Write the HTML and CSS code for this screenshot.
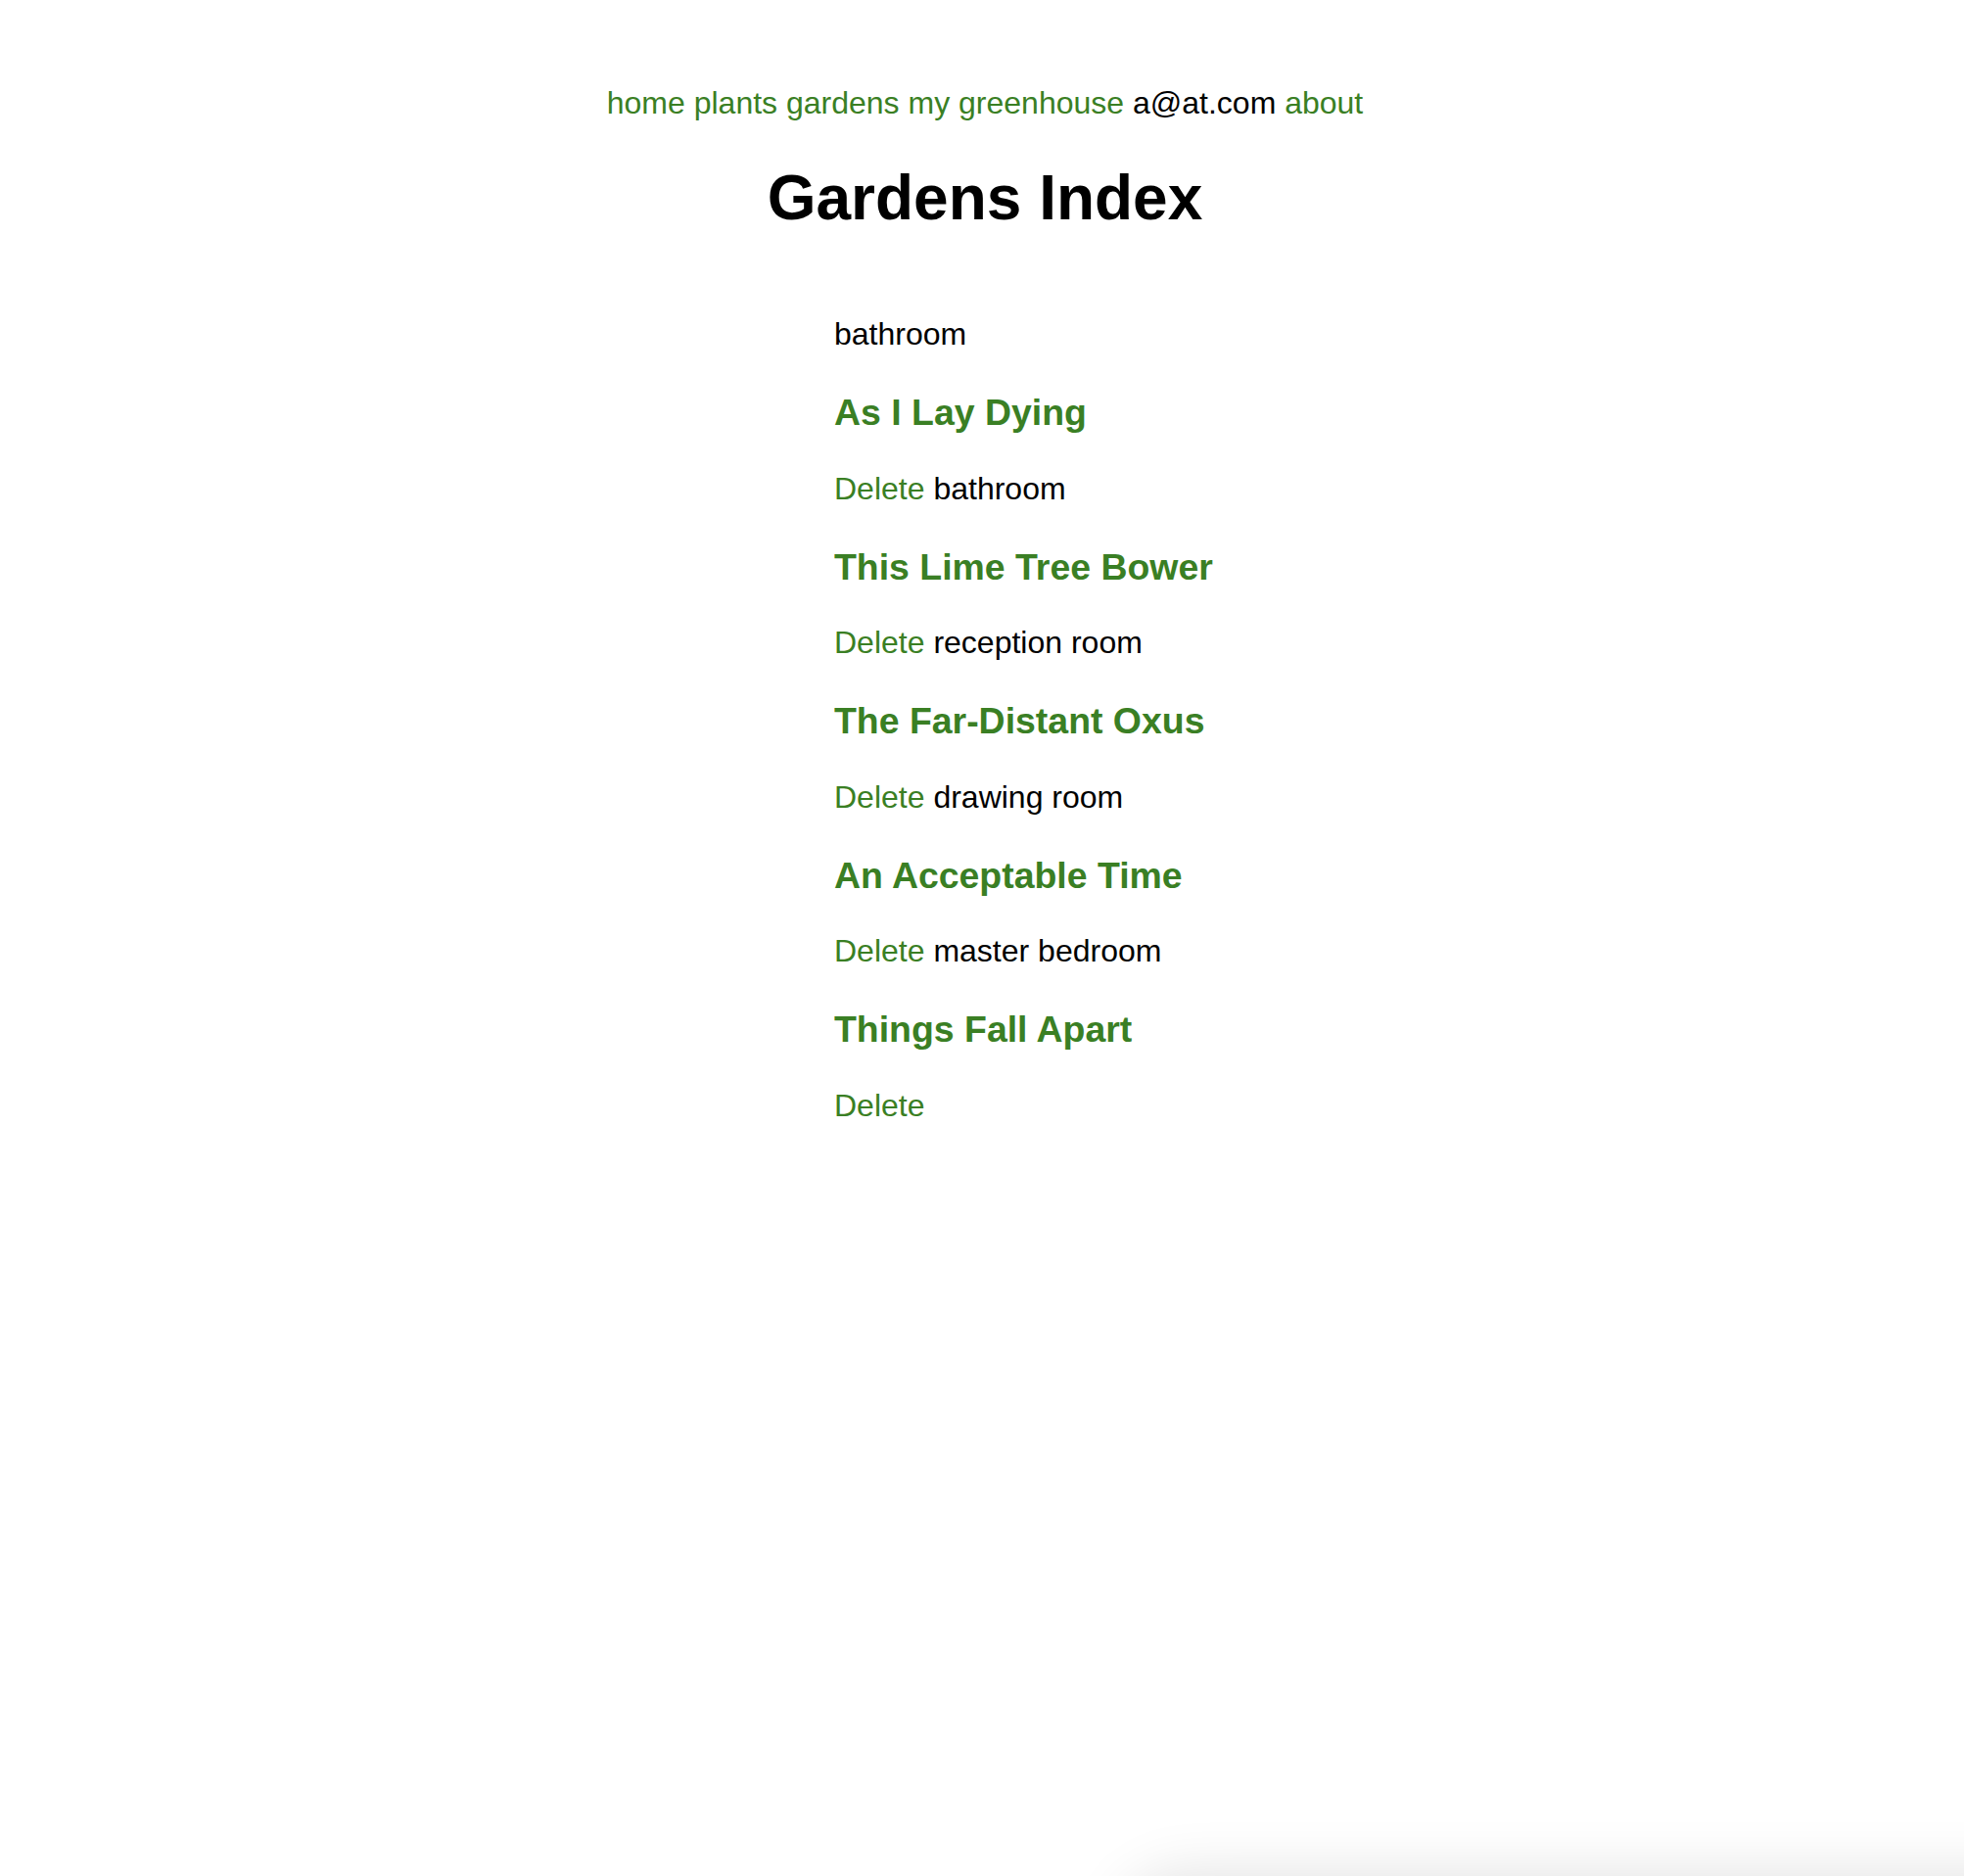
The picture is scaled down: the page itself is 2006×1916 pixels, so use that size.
FILE: index.html
```html
<!DOCTYPE html>
<html lang="en">
<head>
<meta charset="utf-8">
<title>Gardens Index</title>
<link rel="stylesheet" href="styles.css">
</head>
<body>
<nav class="topnav">
  <a href="#">home</a> <a href="#">plants</a> <a href="#">gardens</a> <a href="#">my greenhouse</a> <span class="user">a@at.com</span> <a href="#">about</a>
</nav>
<h1 class="title">Gardens Index</h1>
<main class="gardens">
  <p class="line">bathroom</p>
  <h3 class="garden"><a href="#">As I Lay Dying</a></h3>
  <p class="line"><a href="#">Delete</a> bathroom</p>
  <h3 class="garden"><a href="#">This Lime Tree Bower</a></h3>
  <p class="line"><a href="#">Delete</a> reception room</p>
  <h3 class="garden"><a href="#">The Far-Distant Oxus</a></h3>
  <p class="line"><a href="#">Delete</a> drawing room</p>
  <h3 class="garden"><a href="#">An Acceptable Time</a></h3>
  <p class="line"><a href="#">Delete</a> master bedroom</p>
  <h3 class="garden"><a href="#">Things Fall Apart</a></h3>
  <p class="line"><a href="#">Delete</a></p>
</main>
<div class="edge-shadow"></div>
</body>
</html>
```
FILE: styles.css
```css
html, body {
  margin: 0;
  padding: 0;
  background: #ffffff;
}
body {
  font-family: "Liberation Sans", Arial, sans-serif;
  font-size: 32px;
  color: #000000;
  overflow: hidden;
  height: 1916px;
  padding-left: 6px;
  box-sizing: border-box;
}
a {
  color: #3a7f24;
  text-decoration: none;
}
.topnav {
  text-align: center;
  padding-top: 87px;
  line-height: 37px;
}
.user {
  color: #000000;
}
.title {
  text-align: center;
  font-size: 64px;
  line-height: 74px;
  margin: 41px 0 0 0;
  font-weight: bold;
}
.gardens {
  margin: 84px 0 0 846px;
}
.line {
  margin: 0;
  line-height: 37px;
}
.garden {
  font-size: 37.44px;
  line-height: 43px;
  font-weight: bold;
  margin: 40px 0 37.5px 0;
}
.edge-shadow {
  position: fixed;
  left: 1150px;
  right: -200px;
  top: 1922px;
  height: 200px;
  border-radius: 60px;
  background: #fff;
  box-shadow: 0 0 60px 8px rgba(0, 0, 0, 0.12);
}
```
